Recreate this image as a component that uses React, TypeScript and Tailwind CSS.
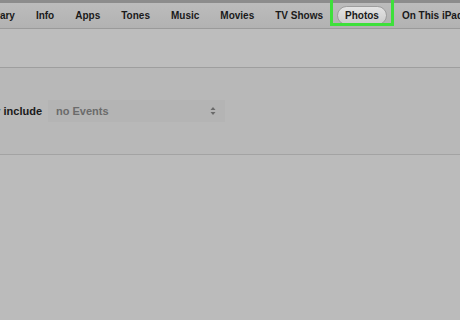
export default function App() {
  const tabs = ["Info", "Apps", "Tones", "Music", "Movies", "TV Shows"];
  return (
    <main
      className="flex h-[320px] w-[460px] flex-col overflow-hidden bg-[#bbbbbb] text-[#1a1a1a]"
      style={{ fontFamily: '"Liberation Sans", Arial, sans-serif' }}
    >
      <div className="h-[3px] shrink-0 bg-[#8c8c8c]" />
      <nav className="relative flex h-[26px] shrink-0 items-center gap-[21px] whitespace-nowrap border-b border-[#9a9a9a] bg-gradient-to-b from-[#bcbcbc] to-[#b2b2b2] text-[10px] font-bold">
        <span className="ml-[-19px]">Library</span>
        {tabs.map((t) => (
          <span key={t}>{t}</span>
        ))}
        <span className="relative flex items-center">
          <span className="ml-[-7px] rounded-full border border-[#9d9d9d] bg-gradient-to-b from-[#e4e4e4] to-[#cbcbcb] px-[7px] py-[1px]">
            Photos
          </span>
          <span className="absolute -left-[14px] -top-[13px] h-[33px] w-[64px] border-[3px] border-[#3ee03b]" />
        </span>
        <span className="ml-[-6px]">On This iPad</span>
      </nav>
      <div className="h-[39px] shrink-0 border-b border-[#9e9e9e] bg-[#bdbdbd]" />
      <section className="flex h-[87px] shrink-0 flex-col border-b border-[#a3a3a3] bg-[#b8b8b8]">
        <div className="mt-[32px] flex items-center">
          <span className="ml-[-30px] w-[72px] text-right text-[11px] font-bold text-[#1a1a1a]">Only include</span>
          <div className="ml-[6px] flex h-[22px] w-[177px] items-center justify-between bg-[#b4b4b4] pl-[8px] pr-[9px] text-[11px] text-[#6b6b6b]">
            <span className="font-bold">no Events</span>
            <svg width="6" height="10" viewBox="0 0 6 10">
              <path d="M3 1 L5.5 4 H0.5 Z" fill="#6a6a6a" />
              <path d="M3 9 L5.5 6 H0.5 Z" fill="#6a6a6a" />
            </svg>
          </div>
        </div>
      </section>
      <div className="flex-1 bg-[#bbbbbb]" />
    </main>
  );
}
